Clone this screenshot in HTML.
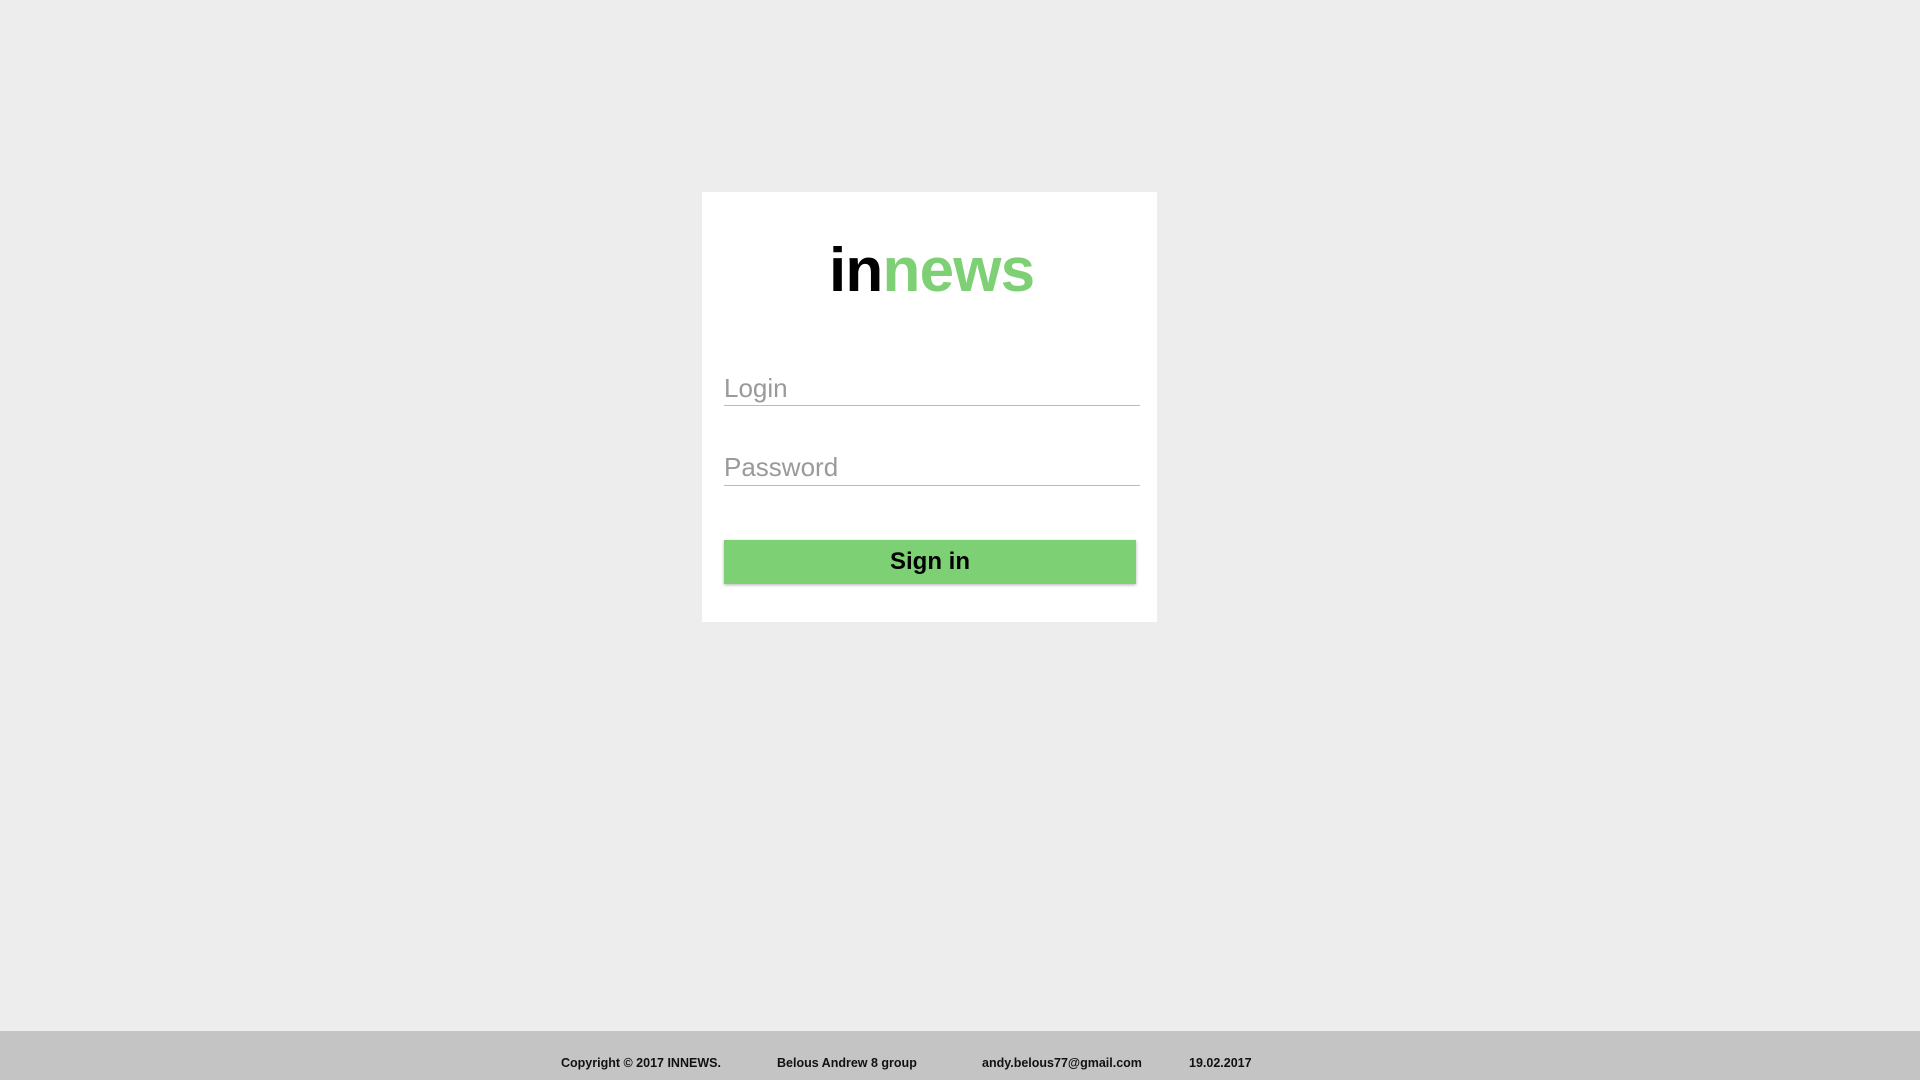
<!DOCTYPE html>
<html><head><meta charset="utf-8"><style>
html,body{margin:0;padding:0;width:1920px;height:1080px;background:#ededed;font-family:"Liberation Sans",sans-serif;overflow:hidden;position:relative}
.card{position:absolute;left:702px;top:192px;width:455px;height:430px;background:#fff}
.logo{position:absolute;left:829px;top:231px;font-size:62px;font-weight:bold;letter-spacing:-0.8px;line-height:80px;color:#000}
.logo span{color:#7ed075}
.f{position:absolute;left:724px;width:416px;border-bottom:1.5px solid #bbb;color:#9a9a9a;font-size:26px;line-height:32px}
.btn{position:absolute;left:724px;top:540px;width:412px;height:44px;background:#7ed075;box-shadow:0 1px 3px rgba(0,0,0,.3);text-align:center;font-weight:bold;font-size:24px;line-height:44px;color:#000}
.foot{position:absolute;left:0;top:1031px;width:1920px;height:49px;background:#c4c4c4}
.foot div{position:absolute;top:25px;font-size:12.5px;font-weight:bold;color:#111;white-space:nowrap}
</style></head><body>
<div class="card"></div>
<div class="logo">in<span>news</span></div>
<div class="f" style="top:372px;height:33px">Login</div>
<div class="f" style="top:451px;height:34px">Password</div>
<div class="btn">Sign in</div>
<div class="foot">
<div style="left:561px">Copyright © 2017 INNEWS.</div>
<div style="left:777px">Belous Andrew 8 group</div>
<div style="left:982px">andy.belous77@gmail.com</div>
<div style="left:1189px">19.02.2017</div>
</div>
</body></html>
